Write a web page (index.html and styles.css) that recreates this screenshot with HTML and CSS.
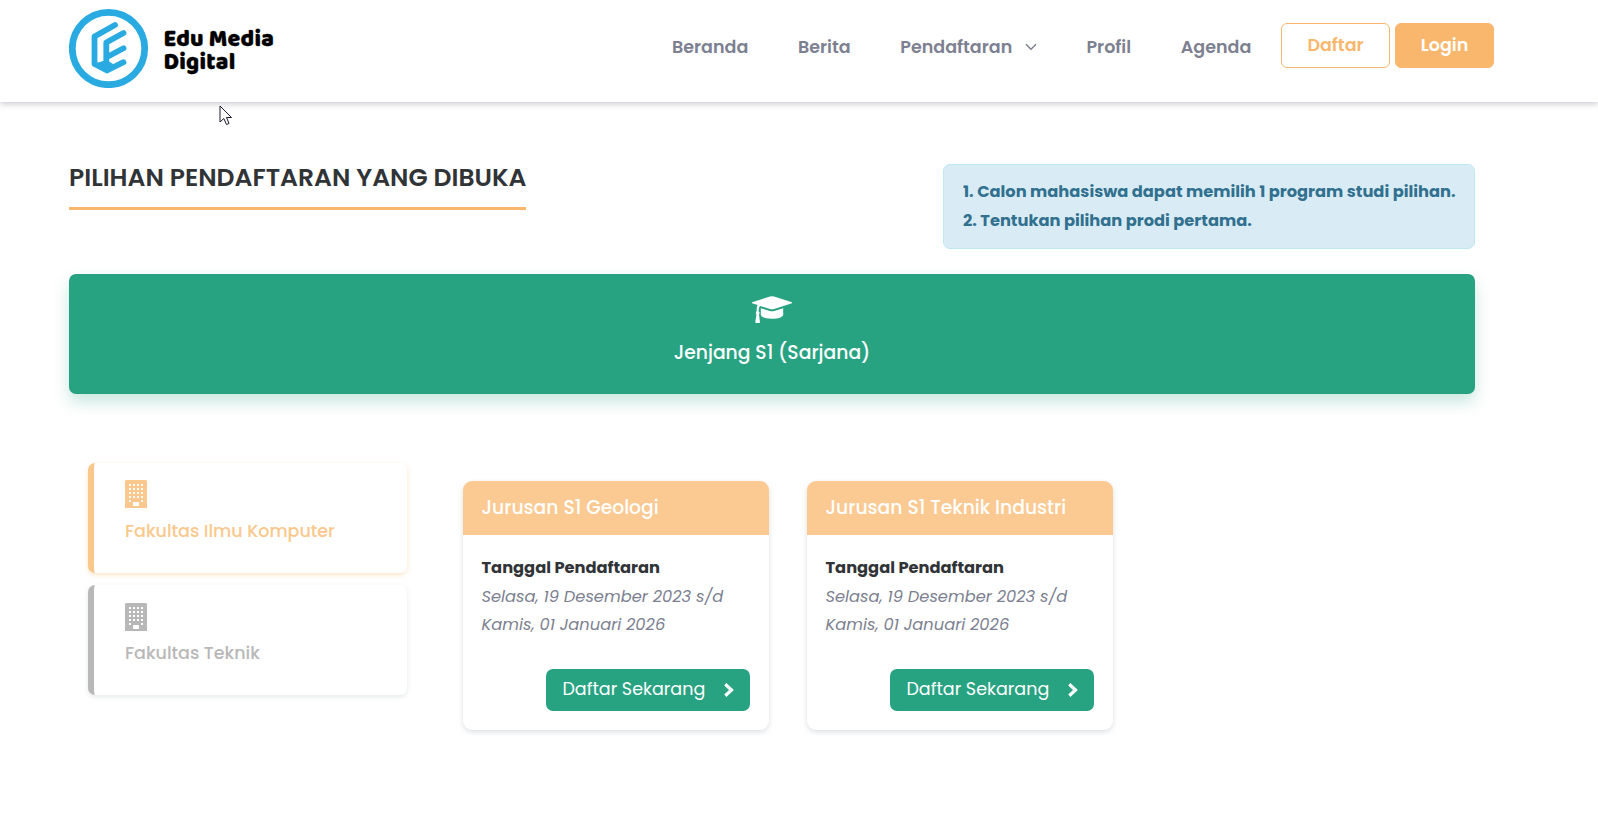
FILE: index.html
```html
<!DOCTYPE html>
<html lang="id">
<head>
<meta charset="utf-8">
<title>Edu Media Digital</title>
<link rel="stylesheet" href="styles.css">
</head>
<body>
<header class="topbar">
  <a class="brand" href="#">
    <svg class="brand-mark" viewBox="0 0 80 80" fill="none" stroke="#29abe2" stroke-linecap="round" stroke-linejoin="round">
      <circle cx="39.500" cy="40.500" r="36.200" stroke-width="6.800"/>
      <path d="M46 17 25.500 28.500V56L38 62.500 54.500 54.200M54.500 25 37.300 34.500V59M54.500 40.200 39 48.500" stroke-width="5.800"/>
      <path d="M38 62.500 28 56 37.500 53 44 57Z" fill="#29abe2" stroke-width="2"/>
    </svg>
    <span class="brand-name"><span class="t">Edu Media</span><span class="t">Digital</span></span>
  </a>
  <nav class="nav">
    <a href="#"><span class="t">Beranda</span></a>
    <a href="#"><span class="t">Berita</span></a>
    <a href="#" class="has-menu"><span class="t">Pendaftaran</span><svg class="caret" viewBox="0 0 12 8" fill="none" stroke="#7c8091" stroke-width="1.500"><path d="M1 1.200 6 6.200 11 1.200"/></svg></a>
    <a href="#"><span class="t">Profil</span></a>
    <a href="#"><span class="t">Agenda</span></a>
  </nav>
  <div class="auth">
    <a class="btn outline" href="#"><span class="t">Daftar</span></a>
    <a class="btn solid" href="#"><span class="t">Login</span></a>
  </div>
</header>
<svg class="pointer" viewBox="0 0 14 21"><path d="M1 1V17L4.800 13.500 7.500 19.500 10 18.500 7.500 12.500H12.500Z" fill="#fff" stroke="#1b1b2b"/></svg>
<main class="page">
  <section class="intro">
    <h1><span class="t">PILIHAN PENDAFTARAN YANG DIBUKA</span></h1>
    <div class="notice"><p><span class="t">1. Calon mahasiswa dapat memilih 1 program studi pilihan.</span></p><p><span class="t">2. Tentukan pilihan prodi pertama.</span></p></div>
  </section>
  <section class="level">
    <svg class="cap" viewBox="0 0 40 27" fill="#fff"><path d="M20 .2Q20.800 .2 22 .5L39.200 6.100Q40.800 6.800 39.200 7.600L22 13Q20 13.500 18 13L8.300 10Q7 10.600 6.800 12.600Q6.800 14 6.500 15.200Q8.300 16.500 7 18.500L8 26.200Q8 27 7.200 27H4Q3.200 27 3.300 26.200L4.400 18.500Q3 16.500 4.700 15V12Q4.800 10 5.800 9L.8 7.600Q-.8 6.800 .8 6.100L18 .5Q19.200 .2 20 .2Z"/><path d="M8.800 12.200 17.700 15Q20 15.700 22.300 15L31.200 12.200V18.500C31.200 21.200 26 22.800 20 22.800S8.800 21.200 8.800 18.500Z"/></svg>
    <span class="t">Jenjang S1 (Sarjana)</span>
  </section>
  <section class="programs">
    <div class="faculties">
      <a class="faculty active" href="#"><svg class="building" viewBox="0 0 22 28"><path fill="currentColor" fill-rule="evenodd" d="M1 0H21L22 1V28H0V1ZM8 22H14V26H8ZM4 4h2v2h-2ZM8 4h2v2h-2ZM12 4h2v2h-2ZM16 4h2v2h-2ZM4 8h2v2h-2ZM8 8h2v2h-2ZM12 8h2v2h-2ZM16 8h2v2h-2ZM4 12h2v2h-2ZM8 12h2v2h-2ZM12 12h2v2h-2ZM16 12h2v2h-2ZM4 16h2v2h-2ZM8 16h2v2h-2ZM12 16h2v2h-2ZM16 16h2v2h-2ZM4 20h2v2h-2ZM16 20h2v2h-2Z"/></svg><span class="t">Fakultas Ilmu Komputer</span></a>
      <a class="faculty" href="#"><svg class="building" viewBox="0 0 22 28"><path fill="currentColor" fill-rule="evenodd" d="M1 0H21L22 1V28H0V1ZM8 22H14V26H8ZM4 4h2v2h-2ZM8 4h2v2h-2ZM12 4h2v2h-2ZM16 4h2v2h-2ZM4 8h2v2h-2ZM8 8h2v2h-2ZM12 8h2v2h-2ZM16 8h2v2h-2ZM4 12h2v2h-2ZM8 12h2v2h-2ZM12 12h2v2h-2ZM16 12h2v2h-2ZM4 16h2v2h-2ZM8 16h2v2h-2ZM12 16h2v2h-2ZM16 16h2v2h-2ZM4 20h2v2h-2ZM16 20h2v2h-2Z"/></svg><span class="t">Fakultas Teknik</span></a>
    </div>
    <article class="card">
      <h2><span class="t">Jurusan S1 Geologi</span></h2>
      <div class="card-body">
        <strong><span class="t">Tanggal Pendaftaran</span></strong>
        <em><span class="t">Selasa, 19 Desember 2023 s/d</span><br><span class="t">Kamis, 01 Januari 2026</span></em>
        <a class="apply" href="#"><span class="t">Daftar Sekarang</span><svg class="next" viewBox="0 0 10 14" fill="none" stroke="#fff" stroke-width="3.200"><path d="M1.300 1.300 7.500 7 1.300 12.700"/></svg></a>
      </div>
    </article>
    <article class="card">
      <h2><span class="t">Jurusan S1 Teknik Industri</span></h2>
      <div class="card-body">
        <strong><span class="t">Tanggal Pendaftaran</span></strong>
        <em><span class="t">Selasa, 19 Desember 2023 s/d</span><br><span class="t">Kamis, 01 Januari 2026</span></em>
        <a class="apply" href="#"><span class="t">Daftar Sekarang</span><svg class="next" viewBox="0 0 10 14" fill="none" stroke="#fff" stroke-width="3.200"><path d="M1.300 1.300 7.500 7 1.300 12.700"/></svg></a>
      </div>
    </article>
  </section>
</main>
</body>
</html>
```
FILE: styles.css
```css
* { box-sizing: border-box; }
body { margin: 0; height: 829px; overflow: hidden; background: #fff; color: #7c8091; font-family: Poppins, Inter, sans-serif; font-size: 16.25px; }
a { color: inherit; text-decoration: none; }
h1, h2, p { margin: 0; }
svg { display: block; flex: none; }
.t { white-space: nowrap; }
.topbar { display: flex; height: 102px; padding-left: 69px; background: #fff; box-shadow: 0 2px 6px rgba(60, 65, 85, .27); }
.brand { display: flex; width: 603px; color: #000; }
.brand-mark { width: 80px; height: 80px; margin-top: 8px; }
.brand-name { display: flex; flex-direction: column; margin: 28px 0 0 14.5px; font: 800 23.3px/23px "Baloo 2", Baloo, Lato, sans-serif; letter-spacing: .25px; -webkit-text-stroke: .3px #000; }
.nav { display: flex; gap: 49.7px; height: 94px; align-items: center; font-size: 17.5px; font-weight: 600; width: 609px; }
.has-menu { display: flex; align-items: center; }
.caret { width: 12px; height: 8px; margin-left: 12.5px; }
.auth { display: flex; gap: 5px; padding-top: 23px; }
.btn { height: 45px; border: 1px solid #f8b76d; border-radius: 6px; font-size: 17.5px; font-weight: 600; line-height: 42px; text-align: center; }
.outline { width: 109px; color: #f8b76d; }
.solid { width: 99px; background: #f8b76d; color: #fff; }
.pointer { position: absolute; left: 219px; top: 105px; width: 14px; height: 21px; }
.page { width: 1406px; margin-left: 69px; }
.intro { display: flex; justify-content: space-between; align-items: flex-start; padding-top: 62px; height: 172px; }
h1 { height: 46px; border-bottom: 3px solid #f8b76d; color: #313437; font-size: 25px; font-weight: 600; line-height: 27px; }
.notice { width: 532px; height: 85px; padding: 12px 19px; border: 1px solid #bee9f2; border-radius: 7px; background: #d9ecf5; color: #31708f; font-weight: 700; line-height: 29px; }
.level { display: flex; flex-direction: column; align-items: center; height: 120px; padding-top: 22px; border-radius: 7px; background: #28a382; color: #fff; font-size: 18.75px; font-weight: 500; box-shadow: 0 8px 16px rgba(40, 163, 130, .25); }
.cap { width: 40px; height: 27px; }
.level .t { margin-top: 18px; line-height: 24px; }
.programs { display: flex; align-items: flex-start; padding: 69px 0 0 19px; }
.faculties { display: grid; gap: 12px; width: 319px; margin-right: 56px; }
.faculty { height: 110px; padding: 17px 0 0 31px; border-left: 6px solid #b8b8b8; border-radius: 7px; background: #fff; color: #b8b8b8; font-size: 17.5px; font-weight: 500; box-shadow: 0 2px 5px rgba(50, 70, 70, .12); }
.faculty:last-child .building { margin-top: 1px; }
.faculty:last-child .t { margin-top: 10px; }
.faculty .t { display: block; width: max-content; margin-top: 11px; line-height: 24px; }
.active { border-color: #fac88c; color: #fac88c; box-shadow: 0 2px 5px rgba(248, 183, 109, .36); }
.building { width: 22px; height: 28px; }
.card { width: 306px; height: 249px; margin: 18px 38px 0 0; overflow: hidden; border-radius: 9px; background: #fff; box-shadow: 0 2px 5px rgba(50, 65, 85, .17); }
h2 { height: 54px; padding-left: 18.5px; background: #fbc992; color: #fff; font-size: 18.75px; font-weight: 500; line-height: 54px; }
.card-body { display: flex; flex-direction: column; padding: 19px 19px 0 18.5px; line-height: 28.5px; }
strong { color: #313437; }
.apply { display: flex; align-items: center; align-self: flex-end; justify-content: space-between; width: 204px; height: 42px; margin-top: 29px; padding: 0 16px 0 16.5px; border-radius: 7px; background: #28a382; color: #fff; font-size: 17.5px; }
.next { width: 10px; height: 14px; }
```
